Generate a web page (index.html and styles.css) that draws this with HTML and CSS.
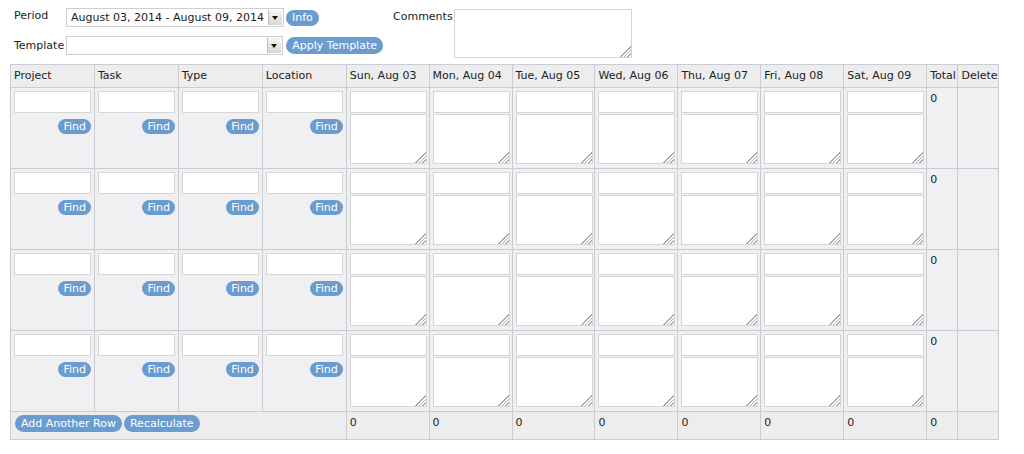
FILE: index.html
```html
<!DOCTYPE html>
<html>
<head>
<meta charset="utf-8">
<link rel="stylesheet" href="styles.css">
</head>
<body>
<div class="page">
  <div class="top">
    <div class="fields">
      <div class="frow">
        <span class="lbl">Period</span>
        <div class="select"><span class="sel-text">August 03, 2014 - August 09, 2014</span><span class="arrow"></span></div>
        <span class="btn btn-info">Info</span>
      </div>
      <div class="frow">
        <span class="lbl">Template</span>
        <div class="select"><span class="sel-text"></span><span class="arrow"></span></div>
        <span class="btn btn-apply">Apply Template</span>
      </div>
    </div>
    <div class="comments">
      <span class="lbl-c">Comments</span>
      <textarea class="ta-comments"></textarea>
    </div>
  </div>

  <table class="grid">
    <colgroup>
      <col class="c-txt"><col class="c-txt"><col class="c-txt"><col class="c-txt">
      <col class="c-day"><col class="c-day"><col class="c-day"><col class="c-day"><col class="c-day"><col class="c-day"><col class="c-day">
      <col class="c-total"><col class="c-del">
    </colgroup>
    <thead>
      <tr>
        <th>Project</th><th>Task</th><th>Type</th><th>Location</th>
        <th>Sun, Aug 03</th><th>Mon, Aug 04</th><th>Tue, Aug 05</th><th>Wed, Aug 06</th><th>Thu, Aug 07</th><th>Fri, Aug 08</th><th>Sat, Aug 09</th>
        <th>Total</th><th>Delete</th>
      </tr>
    </thead>
    <tbody id="rows"></tbody>
    <tfoot>
      <tr>
        <td colspan="4" class="foot-btns"><span class="btn btn-add">Add Another Row</span><span class="btn btn-recalc">Recalculate</span></td>
        <td>0</td><td>0</td><td>0</td><td>0</td><td>0</td><td>0</td><td>0</td>
        <td>0</td><td></td>
      </tr>
    </tfoot>
  </table>
</div>
<script src="script.js"></script>
</body>
</html>
```

FILE: script.js
```js
(function () {
  var tbody = document.getElementById('rows');
  var html = '';
  for (var r = 0; r < 4; r++) {
    html += '<tr>';
    for (var i = 0; i < 4; i++) {
      html += '<td class="txt-cell"><input class="in" type="text"><div class="find-wrap"><span class="btn btn-find">Find</span></div></td>';
    }
    for (var d = 0; d < 7; d++) {
      html += '<td class="day-cell"><input class="in" type="text"><textarea class="ta"></textarea></td>';
    }
    html += '<td class="total-cell">0</td><td></td>';
    html += '</tr>';
  }
  tbody.innerHTML = html;
})();
```

FILE: styles.css
```css
html, body {
  margin: 0;
  padding: 0;
  background: #ffffff;
}
body {
  font-family: "DejaVu Sans", Verdana, sans-serif;
  font-size: 11px;
  color: #222222;
}
.page {
  padding: 8px 26px 0 10px;
}
.top {
  display: flex;
  align-items: flex-start;
  height: 56px;
}
.fields {
  display: flex;
  flex-direction: column;
  gap: 9px;
  width: 373px;
}
.frow {
  display: flex;
  align-items: center;
  height: 19px;
}
.lbl {
  width: 52px;
  padding-left: 4px;
  position: relative;
  top: -2px;
}
.frow:nth-child(2) .lbl { top: 0; }
.select {
  width: 216px;
  height: 17px;
  border: 1px solid #cfcfcf;
  background: #fff;
  display: flex;
  align-items: center;
  justify-content: space-between;
  overflow: hidden;
}
.sel-text {
  padding-left: 4px;
  font-size: 11px;
  color: #222;
  white-space: nowrap;
}
.arrow {
  flex: none;
  width: 13px;
  height: 15px;
  margin-right: 1px;
  background: linear-gradient(#f6f6f6, #d6d6d6);
  border-left: 1px solid #b8b8b8;
  position: relative;
}
.arrow::after {
  content: "";
  position: absolute;
  left: 3px;
  top: 6px;
  border-left: 3.5px solid transparent;
  border-right: 3.5px solid transparent;
  border-top: 4px solid #111;
}
.btn {
  display: inline-block;
  background: #6a9ccf;
  color: #ffffff;
  border-radius: 9px;
  padding: 0 6px;
  height: 16px;
  line-height: 16px;
  font-size: 11px;
  white-space: nowrap;
}
.btn-info { margin-left: 2px; padding: 0 6px; }
.btn-apply { margin-left: 3px; height: 17px; line-height: 17px; }
.comments {
  display: flex;
  align-items: flex-start;
  margin-left: 10px;
}
.lbl-c {
  width: 61px;
  padding-top: 2px;
}
.ta-comments {
  box-sizing: border-box;
  width: 178px;
  height: 49px;
  border: 1px solid #d4d4d4;
  padding: 1px;
  margin: 1px 0 0 0;
  resize: both;
  font-family: inherit;
}
textarea::-webkit-resizer {
  background:
    linear-gradient(135deg, #fff 0, #fff 55%, transparent 55%),
    repeating-linear-gradient(135deg, #fff 0, #fff 1.4px, #ababab 1.4px, #ababab 2.4px);
}
.grid {
  border-collapse: collapse;
  table-layout: fixed;
  width: 989px;
  border: 1px solid #c9c9d1;
}
.c-txt { width: 83px; }
.c-day { width: 82px; }
.c-total { width: 31px; }
.c-del { width: 40px; }
.grid th, .grid td {
  border: 1px solid #cbcbd3;
  padding: 3px 3px;
  vertical-align: top;
  text-align: left;
}
.grid th {
  background: #ededee;
  font-weight: normal;
  height: 16px;
  padding: 4px 3px 2px 3px;
  white-space: nowrap;
  overflow: hidden;
}
.grid tbody td {
  background: #f0f0f2;
  height: 73px;
}
.grid .in {
  display: block;
  box-sizing: border-box;
  width: 77px;
  height: 22px;
  margin: 0;
  border: 1px solid #d6d6d6;
  background: #fff;
  padding: 0 3px;
}
.grid .ta {
  display: block;
  box-sizing: border-box;
  width: 77px;
  height: 50px;
  margin: 1px 0 0 0;
  border: 1px solid #d6d6d6;
  background: #fff;
  padding: 2px;
  resize: both;
}
.find-wrap {
  width: 77px;
  text-align: right;
  margin-top: 6px;
}
.btn-find {
  padding: 0 5px;
  height: 15px;
  line-height: 15px;
  border-radius: 8px;
}
.total-cell {
  padding-top: 4px !important;
}
.grid tfoot td {
  background: #ededee;
  height: 21px;
  padding: 4px 3px 2px 3px;
}
.grid tfoot td.foot-btns {
  padding: 3px 3px 2px 4px;
}
.btn-add, .btn-recalc {
  height: 17px;
  line-height: 17px;
}
.btn-recalc { margin-left: 2px; }
```
